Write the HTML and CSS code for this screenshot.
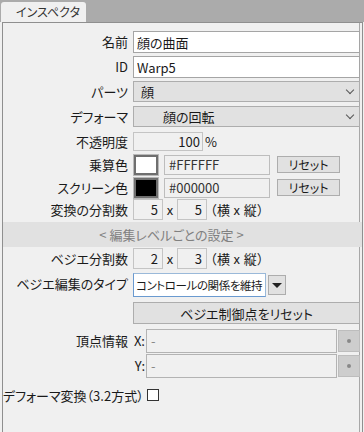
FILE: index.html
```html
<!DOCTYPE html>
<html lang="ja">
<head>
    <meta charset="UTF-8">
    <title>インスペクタ</title>
    <link rel="stylesheet" href="styles.css">
</head>
<body>
    <div class="topbar">
        <div class="tab">インスペクタ</div>
    </div>
    <div class="panel">
        <div class="row h25">
            <span class="label">名前</span>
            <input class="field" type="text" value="顔の曲面">
        </div>
        <div class="row h25">
            <span class="label">ID</span>
            <input class="field" type="text" value="Warp5">
        </div>
        <div class="row h25">
            <span class="label">パーツ</span>
            <div class="select">顔<span class="chev"></span></div>
        </div>
        <div class="row h25">
            <span class="label">デフォーマ</span>
            <div class="select indent">顔の回転<span class="chev"></span></div>
        </div>
        <div class="row h23">
            <span class="label">不透明度</span>
            <div class="inline">
                <span class="num wide">100</span><span class="unit">%</span>
            </div>
        </div>
        <div class="row h23">
            <span class="label">乗算色</span>
            <div class="inline">
                <span class="swatch white"></span>
                <span class="hex">#FFFFFF</span>
                <button class="btn reset">リセット</button>
            </div>
        </div>
        <div class="row h22">
            <span class="label">スクリーン色</span>
            <div class="inline">
                <span class="swatch black"></span>
                <span class="hex">#000000</span>
                <button class="btn reset">リセット</button>
            </div>
        </div>
        <div class="row h23">
            <span class="label">変換の分割数</span>
            <div class="inline">
                <span class="num">5</span><span class="times">x</span><span class="num">5</span><span class="note">（横 x 縦）</span>
            </div>
        </div>

        <div class="section">&lt; 編集レベルごとの設定 &gt;</div>

        <div class="row h25">
            <span class="label">ベジエ分割数</span>
            <div class="inline">
                <span class="num">2</span><span class="times">x</span><span class="num">3</span><span class="note">（横 x 縦）</span>
            </div>
        </div>
        <div class="row h29">
            <span class="label">ベジエ編集のタイプ</span>
            <div class="inline tall">
                <span class="combo">コントロールの関係を維持</span>
                <span class="drop"></span>
            </div>
        </div>
        <div class="row h27">
            <span class="label"></span>
            <button class="btn full">ベジエ制御点をリセット</button>
        </div>
        <div class="vrow">
            <span class="label">頂点情報</span>
            <span class="axis">X:</span>
            <span class="coord">-</span>
            <span class="dot"></span>
        </div>
        <div class="vrow">
            <span class="label"></span>
            <span class="axis">Y:</span>
            <span class="coord">-</span>
            <span class="dot"></span>
        </div>
        <div class="crow">
            <span class="clabel">デフォーマ変換（3.2方式）</span>
            <span class="check"></span>
        </div>
    </div>
</body>
</html>
```

FILE: styles.css
```css
:root {
    --bg: #f0f0f0;
    --line: #adadad;
    --btn: #e1e1e1;
}
* {
    box-sizing: border-box;
}
body {
    margin: 0;
    background: var(--bg);
    font-family: "Noto Sans CJK JP", "Noto Sans", sans-serif;
    font-feature-settings: "palt";
    font-size: 13px;
    color: #1a1a1a;
    width: 364px;
    height: 432px;
    overflow: hidden;
}
.topbar {
    background: #ababab;
    height: 22px;
    padding-left: 1px;
    display: flex;
    align-items: flex-end;
}
.tab {
    width: 85px;
    height: 20px;
    background: var(--bg);
    border-radius: 3px 3px 0 0;
    padding-left: 15px;
    line-height: 20px;
    font-size: 12px;
    color: #333;
}
.panel {
    margin-left: 2px;
    width: 361px;
    height: 410px;
    border: 1px solid #8f8f8f;
    border-bottom: none;
    box-shadow: inset -2px 0 0 var(--bg), inset -3px 0 0 #a8a8a8;
    padding: 8px 2px 0 0;
}
.row {
    display: grid;
    grid-template-columns: 125px 1fr;
    column-gap: 5px;
    align-items: start;
}
.h22 { height: 22px; }
.h23 { height: 23px; }
.h25 { height: 25px; }
.h27 { height: 27px; }
.h29 { height: 29px; }
.label {
    text-align: right;
    white-space: nowrap;
    line-height: 21px;
}
.field {
    height: 22px;
    border: 1px solid #a5a5a5;
    background: #fff;
    font: inherit;
    font-feature-settings: "palt";
    padding: 0 3px;
    color: #1a1a1a;
}
.select {
    position: relative;
    height: 21px;
    background: var(--btn);
    border: 1px solid var(--line);
    line-height: 19px;
    padding-left: 7px;
}
.select.indent {
    padding-left: 29px;
}
.chev {
    position: absolute;
    right: 6px;
    top: 5px;
    width: 6px;
    height: 6px;
    border-right: 1px solid #555;
    border-bottom: 1px solid #555;
    transform: rotate(45deg);
}
.inline {
    display: flex;
    align-items: center;
    height: 21px;
}
.inline.tall {
    height: 24px;
}
.num {
    width: 30px;
    height: 21px;
    border: 1px solid #c4c4c4;
    text-align: right;
    padding-right: 4px;
    line-height: 19px;
}
.num.wide {
    width: 70px;
    height: 19px;
    line-height: 17px;
    padding-right: 2px;
}
.unit {
    margin-left: 2px;
}
.times {
    width: 14px;
    text-align: center;
}
.note {
    margin-left: 3px;
    letter-spacing: 0.4px;
}
.swatch {
    width: 24px;
    height: 20px;
    border: 2px solid #6f6f6f;
    box-shadow: 0 0 0 1px #b9b9b9;
    margin: 0 1px;
}
.swatch.white { background: #fff; }
.swatch.black { background: #000; }
.hex {
    width: 106px;
    height: 20px;
    margin-left: 5px;
    border: 1px solid #bdbdbd;
    padding-left: 4px;
    line-height: 18px;
    color: #333;
}
.btn {
    background: var(--btn);
    border: 1px solid var(--line);
    font: inherit;
    font-feature-settings: "palt";
    color: #1a1a1a;
    padding: 0;
}
.reset {
    width: 63px;
    height: 17px;
    margin-left: 7px;
    line-height: 15px;
    font-size: 12px;
}
.full {
    height: 22px;
    width: 227px;
}
.section {
    height: 25px;
    margin: 0 -2px 1px 0;
    background: #e1e1e1;
    color: #808080;
    text-align: center;
    padding-right: 22px;
    line-height: 25px;
}
.combo {
    width: 133px;
    height: 24px;
    background: #fff;
    border: 1px solid #9ab9d9;
    border-left-color: #6a9ad0;
    border-bottom-color: #6a9ad0;
    line-height: 22px;
    padding-left: 2px;
    font-size: 11.5px;
    letter-spacing: -0.4px;
    white-space: nowrap;
    overflow: hidden;
}
.drop {
    position: relative;
    width: 18px;
    height: 20px;
    margin-left: 2px;
    background: var(--btn);
    border: 1px solid var(--line);
}
.drop::after {
    content: "";
    position: absolute;
    left: 3px;
    top: 7px;
    border-left: 5px solid transparent;
    border-right: 5px solid transparent;
    border-top: 5px solid #222;
}
.vrow {
    display: grid;
    grid-template-columns: 125px 18px 1fr 23px;
    height: 25px;
    align-items: start;
}
.vrow .label {
    line-height: 24px;
}
.axis {
    text-align: right;
    padding-right: 1px;
    line-height: 24px;
}
.coord {
    height: 24px;
    border: 1px solid #b3b3b3;
    padding-left: 4px;
    line-height: 22px;
    color: #888;
}
.dot {
    position: relative;
    height: 22px;
    margin: 1px 0 0 1px;
    background: #cdcdcd;
    border: 1px solid #bdbdbd;
}
.dot::after {
    content: "";
    position: absolute;
    left: 8px;
    top: 8px;
    width: 4px;
    height: 4px;
    border-radius: 50%;
    background: #888;
}
.crow {
    display: grid;
    grid-template-columns: 144px 1fr;
    align-items: center;
    margin-top: 6px;
    height: 20px;
}
.clabel {
    white-space: nowrap;
}
.check {
    width: 12px;
    height: 12px;
    border: 1px solid #333;
    background: #fff;
}
```
